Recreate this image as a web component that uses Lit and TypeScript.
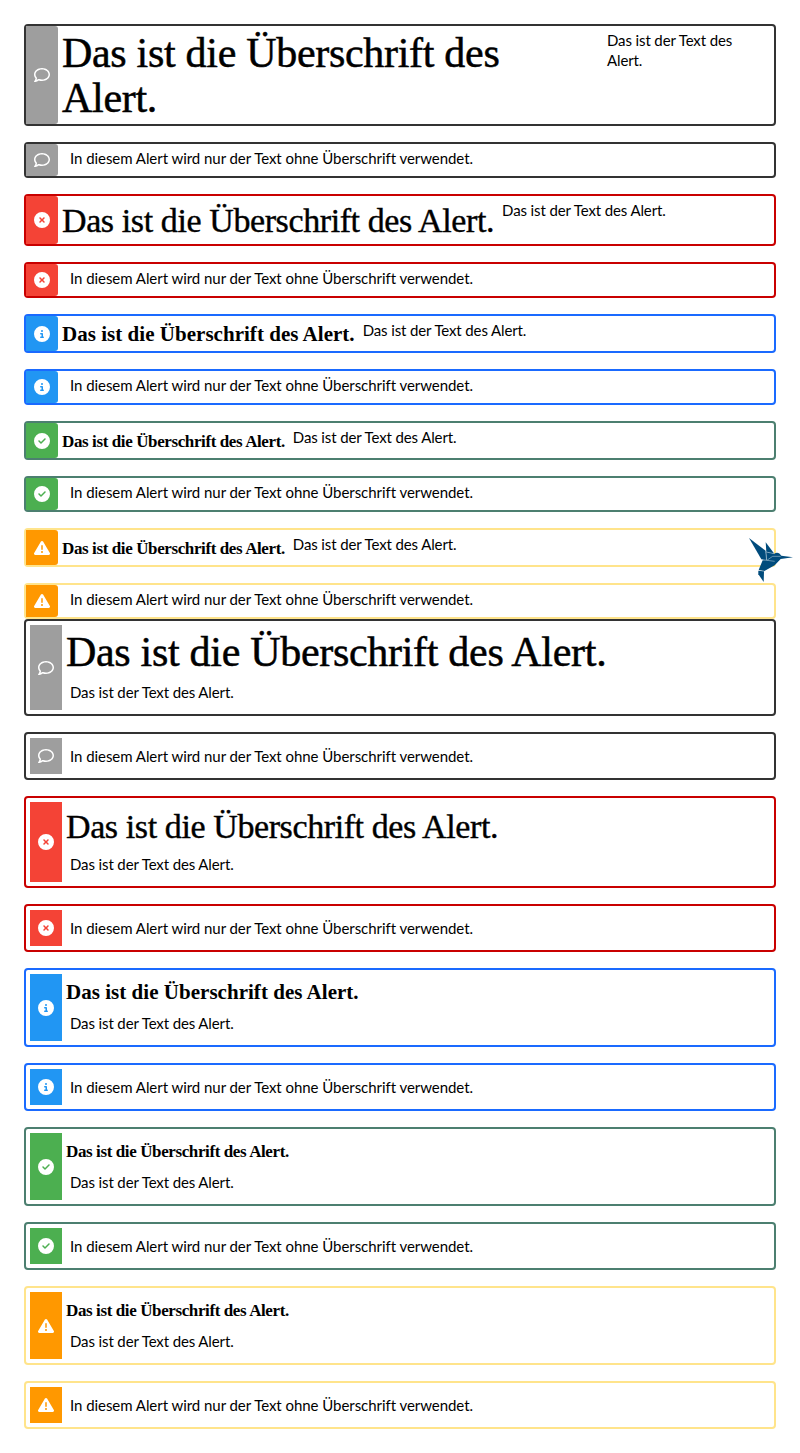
import { LitElement, html, svg, css } from "lit";
import { customElement, property } from "lit/decorators.js";

type Kind = "default" | "error" | "info" | "success" | "warning";

const DISC = "M256 512A256 256 0 1 0 256 0a256 256 0 1 0 0 512z";

const ICONS: Record<Kind, string> = {
  default:
    "M123.6 391.3c12.9-9.4 29.6-11.8 44.6-6.4c26.5 9.6 56.2 15.1 87.8 15.1c124.7 0 208-80.5 208-160s-83.3-160-208-160S48 160.5 48 240c0 32 12.4 62.8 35.7 89.2c8.6 9.7 12.8 22.5 11.8 35.5c-1.4 18.1-5.7 34.7-11.3 49.4c17-7.9 31.1-16.7 39.4-22.7zM21.2 431.9c1.8-2.7 3.5-5.4 5.1-8.1c10-16.6 19.5-38.4 21.4-62.9C17.7 326.8 0 285.1 0 240C0 125.1 114.6 32 256 32s256 93.1 256 208s-114.6 208-256 208c-37.1 0-72.3-6.4-104.1-17.9c-11.9 8.7-31.3 20.6-54.3 30.6c-15.1 6.6-32.3 12.6-50.1 16.1c-.8 .2-1.6 .3-2.4 .5c-4.4 .8-8.7 1.5-13.2 1.9c-.2 0-.5 .1-.7 .1c-5.1 .5-10.2 .8-15.3 .8c-6.5 0-12.3-3.9-14.8-9.9c-2.5-6-1.1-12.8 3.4-17.4c4.1-4.2 7.8-8.7 11.3-13.5c1.7-2.3 3.3-4.6 4.8-6.9z",
  error:
    DISC +
    "M175 175c9.4-9.4 24.6-9.4 33.9 0l47 47 47-47c9.4-9.4 24.6-9.4 33.9 0s9.4 24.6 0 33.9l-47 47 47 47c9.4 9.4 9.4 24.6 0 33.9s-24.6 9.4-33.9 0l-47-47-47 47c-9.4 9.4-24.6 9.4-33.9 0s-9.4-24.6 0-33.9l47-47-47-47c-9.4-9.4-9.4-24.6 0-33.9z",
  info:
    DISC +
    "M216 336h24V272H216c-13.3 0-24-10.7-24-24s10.7-24 24-24h48c13.3 0 24 10.7 24 24v88h8c13.3 0 24 10.7 24 24s-10.7 24-24 24H216c-13.3 0-24-10.7-24-24s10.7-24 24-24zm40-208a32 32 0 1 1 0 64 32 32 0 1 1 0-64z",
  success:
    DISC +
    "M369 209L241 337c-9.4 9.4-24.6 9.4-33.9 0l-64-64c-9.4-9.4-9.4-24.6 0-33.9s24.6-9.4 33.9 0l47 47L335 175c9.4-9.4 24.6-9.4 33.9 0s9.4 24.6 0 33.9z",
  warning:
    "M256 32c14.2 0 27.3 7.5 34.5 19.8l216 368c7.3 12.4 7.3 27.7 .2 40.1S486.3 480 472 480H40c-14.3 0-27.6-7.7-34.7-20.1s-7-27.8 .2-40.1l216-368C228.7 39.5 241.8 32 256 32zm0 128c-13.3 0-24 10.7-24 24V296c0 13.3 10.7 24 24 24s24-10.7 24-24V184c0-13.3-10.7-24-24-24zm32 224a32 32 0 1 0 -64 0 32 32 0 1 0 64 0z",
};

const TITLE = "Das ist die Überschrift des Alert.";
const TEXT = "Das ist der Text des Alert.";
const TEXT_ONLY = "In diesem Alert wird nur der Text ohne Überschrift verwendet.";

@customElement("kol-alert")
class KolAlert extends LitElement {
  @property() kind: Kind = "default";
  @property() variant: "msg" | "card" = "msg";
  @property({ type: Number }) level = 0;

  static styles = css`
    :host {
      display: block;
    }
    .alert {
      display: flex;
      box-sizing: border-box;
      border: 2px solid var(--line);
      border-radius: 4px;
      background: #fff;
      color: #000;
    }
    .default { --line: #333; --fill: #9e9e9e; }
    .error { --line: #c90000; --fill: #f44336; }
    .info { --line: #1a6aff; --fill: #2196f3; }
    .success { --line: #4c7f70; --fill: #4caf50; }
    .warning { --line: #ffe48b; --fill: #ff9800; }

    .icon {
      flex: none;
      width: 32px;
      display: flex;
      align-items: center;
      justify-content: center;
      background: var(--fill);
    }
    .icon svg {
      width: 16px;
      height: 16px;
      fill: #fff;
    }
    .body {
      flex: 1;
      display: flex;
    }
    .title {
      margin: 0 0 -1px;
      padding-top: 1px;
      font-family: "Liberation Serif", serif;
      font-weight: 400;
    }
    .h1 { font-size: 42px; line-height: 45px; letter-spacing: -0.3px; -webkit-text-stroke: 0.5px #000; }
    .h2 { font-size: 34px; line-height: 40px; letter-spacing: -0.4px; -webkit-text-stroke: 0.4px #000; }
    .h3 { font-size: 21px; line-height: 27px; font-weight: 700; letter-spacing: 0.03px; }
    .h4 { font-size: 17px; line-height: 28px; font-weight: 700; letter-spacing: -0.39px; }
    .text {
      font: 400 15px/20px Lato, sans-serif;
      letter-spacing: -0.12px;
    }
    .l0 .text { letter-spacing: -0.05px; }

    .msg { min-height: 36px; }
    .msg .icon { border-radius: 0 3px 3px 0; }
    .msg .body { padding: 4px; }
    .msg .text { padding-left: 8px; }
    .msg.l1 { height: 102px; }
    .msg.l2 { height: 52px; }
    .msg.l3, .msg.l4 { height: 39px; }
    .msg .h1 { flex: none; width: 537px; }

    .card { padding: 4px; height: 48px; }
    .card .body { flex-direction: column; gap: 8px; padding: 4px; }
    .card .text { padding-left: 4px; }
    .card .h4 { margin-bottom: -2px; }
    .card.l0 .body { padding: 8px 4px; }
    .card.l1 { height: 97px; }
    .card.l2 { height: 92px; }
    .card.l3, .card.l4 { height: 79px; }
  `;

  private heading() {
    switch (this.level) {
      case 1:
        return html`<h1 class="title h1">${TITLE}</h1>`;
      case 2:
        return html`<h2 class="title h2">${TITLE}</h2>`;
      case 3:
        return html`<h3 class="title h3">${TITLE}</h3>`;
      case 4:
        return html`<h4 class="title h4">${TITLE}</h4>`;
      default:
        return null;
    }
  }

  render() {
    return html`<div class="alert ${this.kind} ${this.variant} l${this.level}">
      <div class="icon">
        <svg viewBox="0 0 512 512" aria-hidden="true">
          ${svg`<path fill-rule="evenodd" d=${ICONS[this.kind]}></path>`}
        </svg>
      </div>
      <div class="body">
        ${this.heading()}
        <div class="text">${this.level ? TEXT : TEXT_ONLY}</div>
      </div>
    </div>`;
  }
}

const ROWS: [Kind, number][] = [
  ["default", 1],
  ["error", 2],
  ["info", 3],
  ["success", 4],
  ["warning", 4],
];

@customElement("app-root")
class AppRoot extends LitElement {
  static styles = css`
    :host {
      display: block;
      box-sizing: border-box;
      min-height: 1453px;
      padding: 24px;
      background: #fff;
    }
    .group {
      display: grid;
      gap: 16px;
    }
    .bird {
      position: absolute;
      left: 740px;
      top: 530px;
      width: 60px;
      height: 60px;
    }
  `;

  private group(variant: "msg" | "card") {
    return html`<section class="group">
      ${ROWS.map(
        ([kind, level]) => html`
          <kol-alert .kind=${kind} .variant=${variant} .level=${level}></kol-alert>
          <kol-alert .kind=${kind} .variant=${variant} .level=${0}></kol-alert>
        `
      )}
    </section>`;
  }

  render() {
    return html`
      ${this.group("msg")} ${this.group("card")}
      <svg class="bird" viewBox="0 0 180 180" aria-hidden="true">
        <g fill="#004b7c">
          <path d="M27 24L77 62L80 92L64 88Z"></path>
          <path d="M77 37L103 71L79 66Z"></path>
          <path d="M78 65L103 71Q111 65 119 71L124 77L159 82L122 87L104 106L72 124L56 120L68 91L80 90Z"></path>
          <path d="M55 122L72 124L71 156L55 133Z"></path>
        </g>
        <g stroke="#c9dae5" stroke-width="1.5" fill="none">
          <path d="M77 64L80 91M78 66L103 71M66 89L104 94M82 90L98 79L122 79M55 121L73 123"></path>
        </g>
      </svg>
    `;
  }
}
